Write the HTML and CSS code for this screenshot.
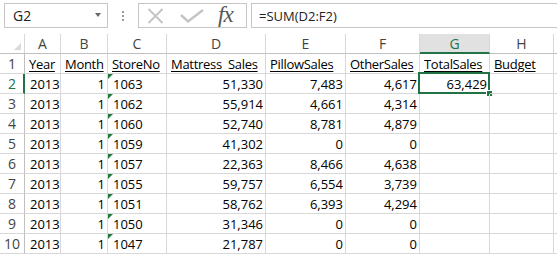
FILE: index.html
```html
<!DOCTYPE html>
<html>
<head>
<meta charset="utf-8">
<link rel="stylesheet" href="styles.css">
</head>
<body>
<div class="fbar">
  <div class="namebox"><span>G2</span><span class="dd"></span></div>
  <div class="dots"><i></i><i></i><i></i></div>
  <div class="fxbox">
    <svg class="ico-x" width="17" height="16" viewBox="0 0 17 16"><path d="M1.5 1 L15.5 15 M15.5 1 L1.5 15" stroke="#c4c4c4" stroke-width="2" fill="none"/></svg>
    <svg class="ico-ok" width="24" height="14" viewBox="0 0 24 14"><path d="M1 6 L8 12.5 L23 1" stroke="#c4c4c4" stroke-width="2.4" fill="none"/></svg>
    <span class="fx">fx</span>
  </div>
  <div class="formula">=SUM(D2:F2)</div>
</div>
<div class="sheet">
  <div class="ch corner"><span class="tri"></span></div>
  <div class="ch">A</div><div class="ch">B</div><div class="ch">C</div><div class="ch">D</div><div class="ch">E</div><div class="ch">F</div><div class="ch sel">G</div><div class="ch">H</div><div class="ch rest"></div>

  <div class="rh">1</div>
  <div class="c u"><span>Year</span></div><div class="c u"><span>Month</span></div><div class="c u"><span>StoreNo</span></div><div class="c u"><span>Mattress&nbsp; Sales</span></div><div class="c u"><span>PillowSales</span></div><div class="c u"><span>OtherSales</span></div><div class="c u"><span>TotalSales</span></div><div class="c u"><span>Budget</span></div><div class="c rest"></div>

  <div class="rh rsel">2</div>
  <div class="c">2013</div><div class="c n">1</div><div class="c t">1063</div><div class="c n">51,330</div><div class="c n">7,483</div><div class="c n">4,617</div><div class="c n active">63,429<span class="box"></span><span class="handle"></span></div><div class="c"></div><div class="c rest"></div>

  <div class="rh">3</div>
  <div class="c">2013</div><div class="c n">1</div><div class="c t">1062</div><div class="c n">55,914</div><div class="c n">4,661</div><div class="c n">4,314</div><div class="c"></div><div class="c"></div><div class="c rest"></div>

  <div class="rh">4</div>
  <div class="c">2013</div><div class="c n">1</div><div class="c t">1060</div><div class="c n">52,740</div><div class="c n">8,781</div><div class="c n">4,879</div><div class="c"></div><div class="c"></div><div class="c rest"></div>

  <div class="rh">5</div>
  <div class="c">2013</div><div class="c n">1</div><div class="c t">1059</div><div class="c n">41,302</div><div class="c n">0</div><div class="c n">0</div><div class="c"></div><div class="c"></div><div class="c rest"></div>

  <div class="rh">6</div>
  <div class="c">2013</div><div class="c n">1</div><div class="c t">1057</div><div class="c n">22,363</div><div class="c n">8,466</div><div class="c n">4,638</div><div class="c"></div><div class="c"></div><div class="c rest"></div>

  <div class="rh">7</div>
  <div class="c">2013</div><div class="c n">1</div><div class="c t">1055</div><div class="c n">59,757</div><div class="c n">6,554</div><div class="c n">3,739</div><div class="c"></div><div class="c"></div><div class="c rest"></div>

  <div class="rh">8</div>
  <div class="c">2013</div><div class="c n">1</div><div class="c t">1051</div><div class="c n">58,762</div><div class="c n">6,393</div><div class="c n">4,294</div><div class="c"></div><div class="c"></div><div class="c rest"></div>

  <div class="rh">9</div>
  <div class="c">2013</div><div class="c n">1</div><div class="c t">1050</div><div class="c n">31,346</div><div class="c n">0</div><div class="c n">0</div><div class="c"></div><div class="c"></div><div class="c rest"></div>

  <div class="rh">10</div>
  <div class="c">2013</div><div class="c n">1</div><div class="c t">1047</div><div class="c n">21,787</div><div class="c n">0</div><div class="c n">0</div><div class="c"></div><div class="c"></div><div class="c rest"></div>
</div>
</body>
</html>
```

FILE: styles.css
```css
* { box-sizing: border-box; }
html, body { margin: 0; padding: 0; background: #fff; }
body {
  width: 557px;
  height: 255px;
  overflow: hidden;
  font-family: "Open Sans", "Liberation Sans", sans-serif;
  font-size: 13px;
  color: #000;
}

/* formula bar */
.fbar {
  height: 34px;
  display: flex;
  align-items: flex-start;
  padding-top: 3px;
}
.namebox {
  margin-left: 4px;
  width: 104px;
  height: 25px;
  border: 1px solid #c6c6c6;
  display: flex;
  align-items: center;
  justify-content: space-between;
  padding: 0 6px 0 8px;
  font-size: 14px;
  color: #222;
}
.dd {
  width: 0; height: 0;
  border-left: 3.5px solid transparent;
  border-right: 3.5px solid transparent;
  border-top: 4px solid #6a6a6a;
  margin-top: -2px;
}
.dots {
  width: 30px;
  height: 25px;
  display: flex;
  flex-direction: column;
  align-items: center;
  justify-content: center;
  gap: 2px;
}
.dots i {
  display: block;
  width: 2px;
  height: 2px;
  background: #9a9a9a;
}
.fxbox {
  width: 109px;
  height: 25px;
  border: 1px solid #c6c6c6;
  display: flex;
  align-items: center;
  padding-left: 8px;
}
.ico-x { margin-right: 16px; }
.ico-ok { margin-right: 14px; margin-top: 1px; }
.fx {
  font-family: "Liberation Serif", "DejaVu Serif", serif;
  font-style: italic;
  font-size: 23px;
  color: #555;
  letter-spacing: -1px;
  line-height: 1;
  margin-top: -3px;
}
.formula {
  margin-left: 4px;
  flex: 1;
  height: 25px;
  border-top: 1px solid #c6c6c6;
  border-bottom: 1px solid #c6c6c6;
  border-left: 1px solid #c6c6c6;
  padding-left: 7px;
  display: flex;
  align-items: center;
  font-size: 13px;
  color: #222;
}

/* sheet grid */
.sheet {
  display: grid;
  grid-template-columns: 25px 36px 47px 59px 99px 80px 74px 70px 64px 1fr;
  grid-auto-rows: 20px;
}
.ch, .rh, .c {
  border-right: 1px solid #d8d8d8;
  border-bottom: 1px solid #d8d8d8;
  white-space: nowrap;
  overflow: visible;
}
.ch {
  color: #444;
  text-align: center;
  line-height: 20px;
  font-size: 14px;
  border-bottom-color: #c0c0c0;
}
.ch.rest, .c.rest { border-right: none; }
.corner { position: relative; }
.tri {
  position: absolute;
  right: 3px;
  bottom: 3px;
  width: 0; height: 0;
  border-left: 7px solid transparent;
  border-bottom: 7px solid #dadada;
}
.ch.sel {
  background: #e1e1e1;
  color: #217346;
  border-bottom: 2px solid #217346;
  line-height: 19px;
}
.rh {
  color: #444;
  text-align: center;
  line-height: 20px;
  font-size: 14px;
  border-right-color: #c0c0c0;
}
.rh.rsel {
  color: #217346;
  border-right: 2px solid #217346;
  padding-left: 1px;
}
.c {
  position: relative;
  padding: 0 3px 0 5px;
  line-height: 21px;
}
.c.n { text-align: right; padding-right: 2px; }
.c.u { letter-spacing: -0.3px; padding-left: 4px; }
.c.u span {
  text-decoration: underline;
  text-underline-offset: 2px;
}
.c.t::before {
  content: "";
  position: absolute;
  left: 0;
  top: 0;
  width: 0; height: 0;
  border-top: 5px solid #1e7b3e;
  border-right: 5px solid transparent;
}
.active .box {
  position: absolute;
  left: -2px;
  top: -2px;
  right: -1px;
  bottom: -1px;
  border: 2px solid #217346;
}
.active .handle {
  position: absolute;
  right: -4px;
  bottom: -4px;
  width: 7px;
  height: 7px;
  background: #217346;
  border: 1px solid #fff;
}
```
